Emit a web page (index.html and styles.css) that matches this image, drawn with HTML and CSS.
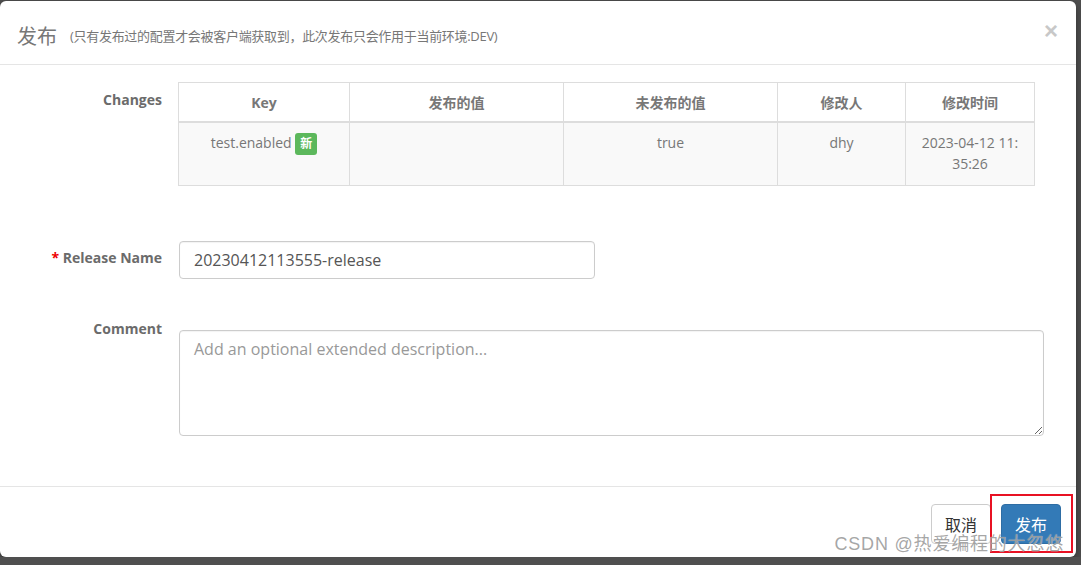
FILE: index.html
```html
<!DOCTYPE html>
<html lang="zh-CN">
<head>
    <meta charset="UTF-8">
    <title>发布</title>
    <link rel="stylesheet" href="styles.css">
</head>
<body>
    <div class="modal">
        <div class="modal-header">
            <span class="modal-title">发布</span>
            <span class="modal-tip">(只有发布过的配置才会被客户端获取到，此次发布只会作用于当前环境:DEV)</span>
            <span class="close">&times;</span>
        </div>

        <div class="modal-body">
            <div class="form-row changes-row">
                <label class="control-label">Changes</label>
                <table class="changes">
                    <thead>
                        <tr>
                            <th class="col-key">Key</th>
                            <th class="col-old">发布的值</th>
                            <th class="col-new">未发布的值</th>
                            <th class="col-user">修改人</th>
                            <th class="col-time">修改时间</th>
                        </tr>
                    </thead>
                    <tbody>
                        <tr>
                            <td>test.enabled <span class="badge-new">新</span></td>
                            <td></td>
                            <td>true</td>
                            <td>dhy</td>
                            <td>2023-04-12 11:<br>35:26</td>
                        </tr>
                    </tbody>
                </table>
            </div>

            <div class="form-row name-row">
                <label class="control-label"><span class="required">*</span> Release Name</label>
                <input type="text" class="form-control name-input" value="20230412113555-release">
            </div>

            <div class="form-row comment-row">
                <label class="control-label">Comment</label>
                <textarea class="form-control comment-input" placeholder="Add an optional extended description..."></textarea>
            </div>
        </div>

        <div class="modal-footer">
            <button class="btn btn-default">取消</button>
            <button class="btn btn-primary">发布</button>
            <div class="mark-box"></div>
            <div class="watermark">CSDN @热爱编程的大忽悠</div>
        </div>
    </div>
</body>
</html>
```

FILE: styles.css
```css
body {
    margin: 0;
    padding-top: 1px;
    background-color: #4f4f4f;
    font-family: "Open Sans", "Noto Sans CJK SC", sans-serif;
    font-size: 14px;
    color: #777;
}

.modal {
    width: 1076px;
    height: 556px;
    background-color: #fff;
    border-radius: 6px;
    box-shadow: 0 3px 9px rgba(0, 0, 0, 0.4);
    display: flex;
    flex-direction: column;
}

.modal-header {
    position: relative;
    display: flex;
    align-items: center;
    padding: 17px 15px 12px 17px;
    height: 34px;
    border-bottom: 1px solid #e5e5e5;
}

.modal-title {
    font-size: 20px;
    color: #777;
}

.modal-tip {
    margin-left: 13px;
    font-size: 13px;
    color: #777;
    letter-spacing: -0.3px;
}

.close {
    position: absolute;
    right: 18px;
    top: 16px;
    font-family: "Liberation Sans", sans-serif;
    font-size: 24px;
    font-weight: bold;
    color: #c8c8c8;
}

.modal-body {
    flex: 1;
    padding: 17px 0 0 0;
}

.form-row {
    display: grid;
    grid-template-columns: 162px 1fr;
    column-gap: 16px;
}

.control-label {
    text-align: right;
    font-weight: bold;
    color: #6b6b6b;
    padding-top: 8px;
    line-height: 20px;
}

.required {
    color: #e00;
}

.changes {
    width: 857px;
    border-collapse: collapse;
    border: 1px solid #ddd;
    color: #777;
}

.changes th,
.changes td {
    border: 1px solid #ddd;
    text-align: center;
    line-height: 21px;
}

.changes th {
    padding: 9px 8px 8px;
    border-bottom-width: 2px;
    font-weight: bold;
    background-color: #fff;
}

.changes td {
    padding: 9px 8px 11px;
    vertical-align: top;
    background-color: #f9f9f9;
}

.col-key { width: 154px; }
.col-old { width: 197px; }
.col-new { width: 197px; }
.col-user { width: 111px; }

.badge-new {
    display: inline-block;
    padding: 1px 5px;
    background-color: #5cb85c;
    color: #fff;
    font-size: 12px;
    font-weight: bold;
    border-radius: 3px;
    line-height: 20px;
}

.name-row {
    margin-top: 55px;
}

.name-row .control-label {
    padding-top: 7px;
}

.form-control {
    box-sizing: border-box;
    margin-left: 1px;
    border: 1px solid #ccc;
    border-radius: 4px;
    font-family: "Open Sans", "Noto Sans CJK SC", sans-serif;
    font-size: 16px;
    color: #555;
    padding: 6px 14px;
    box-shadow: inset 0 1px 1px rgba(0, 0, 0, 0.05);
}

.name-input {
    width: 416px;
    height: 38px;
}

.comment-row {
    margin-top: 51px;
}

.comment-row .control-label {
    margin-top: -11px;
    padding-top: 0;
}

.comment-input {
    width: 865px;
    height: 106px;
    padding-top: 7px;
}

.comment-input::placeholder {
    color: #999;
}

.modal-footer {
    position: relative;
    display: flex;
    justify-content: flex-end;
    gap: 10px;
    padding: 17px 15px 13px;
    border-top: 1px solid #e5e5e5;
}

.btn {
    font-family: "Noto Sans CJK SC", sans-serif;
    font-size: 16px;
    height: 40px;
    padding: 0 13px;
    border: 1px solid #ccc;
    border-radius: 4px;
    background-color: #fff;
    color: #333;
}

.btn-primary {
    background-color: #337ab7;
    border-color: #2e6da4;
    color: #fff;
}

.mark-box {
    position: absolute;
    right: 3px;
    top: 7px;
    width: 79px;
    height: 55px;
    border: 2px solid #e81123;
}

.watermark {
    position: absolute;
    right: 12px;
    top: 46px;
    font-family: "Liberation Sans", "Noto Sans CJK SC", sans-serif;
    font-size: 18px;
    line-height: 22px;
    letter-spacing: 0.8px;
    color: rgba(150, 150, 150, 0.85);
    text-shadow: 0 0 1px rgba(255, 255, 255, 0.6);
}
```
